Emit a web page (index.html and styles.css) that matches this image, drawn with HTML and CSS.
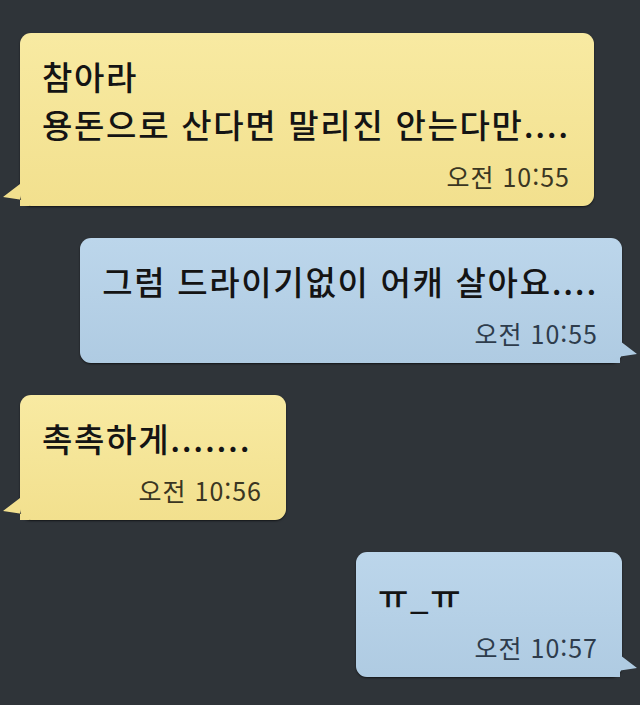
FILE: index.html
```html
<!DOCTYPE html>
<html lang="ko">
<head>
    <meta charset="UTF-8">
    <meta name="viewport" content="width=device-width, initial-scale=1.0">
    <title>Chat</title>
    <link rel="stylesheet" href="styles.css">
</head>
<body>
    <div class="chat">
        <div class="bubble left">
            <div class="text">참아라<br>용돈으로 산다면 말리진 안는다만....</div>
            <div class="time">오전 10:55</div>
        </div>
        <div class="bubble right">
            <div class="text">그럼 드라이기없이 어캐 살아요....</div>
            <div class="time">오전 10:55</div>
        </div>
        <div class="bubble left">
            <div class="text">촉촉하게.......</div>
            <div class="time">오전 10:56</div>
        </div>
        <div class="bubble right">
            <div class="text">ㅠ_ㅠ</div>
            <div class="time">오전 10:57</div>
        </div>
    </div>
</body>
</html>
```
FILE: styles.css
```css
html, body {
    height: 100%;
}
body {
    margin: 0;
    background-color: #2f3439;
    font-family: "Noto Sans CJK KR", "Noto Sans", sans-serif;
    overflow: hidden;
}
.chat {
    display: flex;
    flex-direction: column;
    gap: 32px;
    padding: 33px 18px 0 20px;
}
.bubble {
    position: relative;
    min-width: 220px;
    padding: 19px 24px 15px 22px;
    border-radius: 11px;
    box-shadow: 0 1px 2px rgba(0, 0, 0, 0.6);
}
.bubble.left {
    align-self: flex-start;
    background: linear-gradient(#f8eaa2, #f2e08e);
}
.bubble.right {
    align-self: flex-end;
    background: linear-gradient(#bcd6eb, #afcbe2);
}
.bubble::before {
    content: "";
    position: absolute;
    bottom: 0;
    width: 28px;
    height: 22px;
}
.bubble.left::before {
    left: -17px;
    background-color: #f2e08e;
    clip-path: polygon(17px 0, 0 13px, 20px 16px, 27px 22px, 17px 22px);
}
.bubble.right::before {
    right: -15px;
    background-color: #afcbe2;
    clip-path: polygon(11px 0, 28px 13px, 8px 16px, 1px 22px, 11px 22px);
}
.text {
    font-size: 33px;
    font-weight: 500;
    line-height: 48px;
    letter-spacing: 1.7px;
    color: #141414;
    white-space: nowrap;
}
.time {
    margin-top: 13px;
    text-align: right;
    font-size: 25px;
    line-height: 30px;
    letter-spacing: 1px;
    white-space: nowrap;
}
.left .time {
    color: #3a3622;
}
.right .time {
    color: #2e3c4c;
}
```
